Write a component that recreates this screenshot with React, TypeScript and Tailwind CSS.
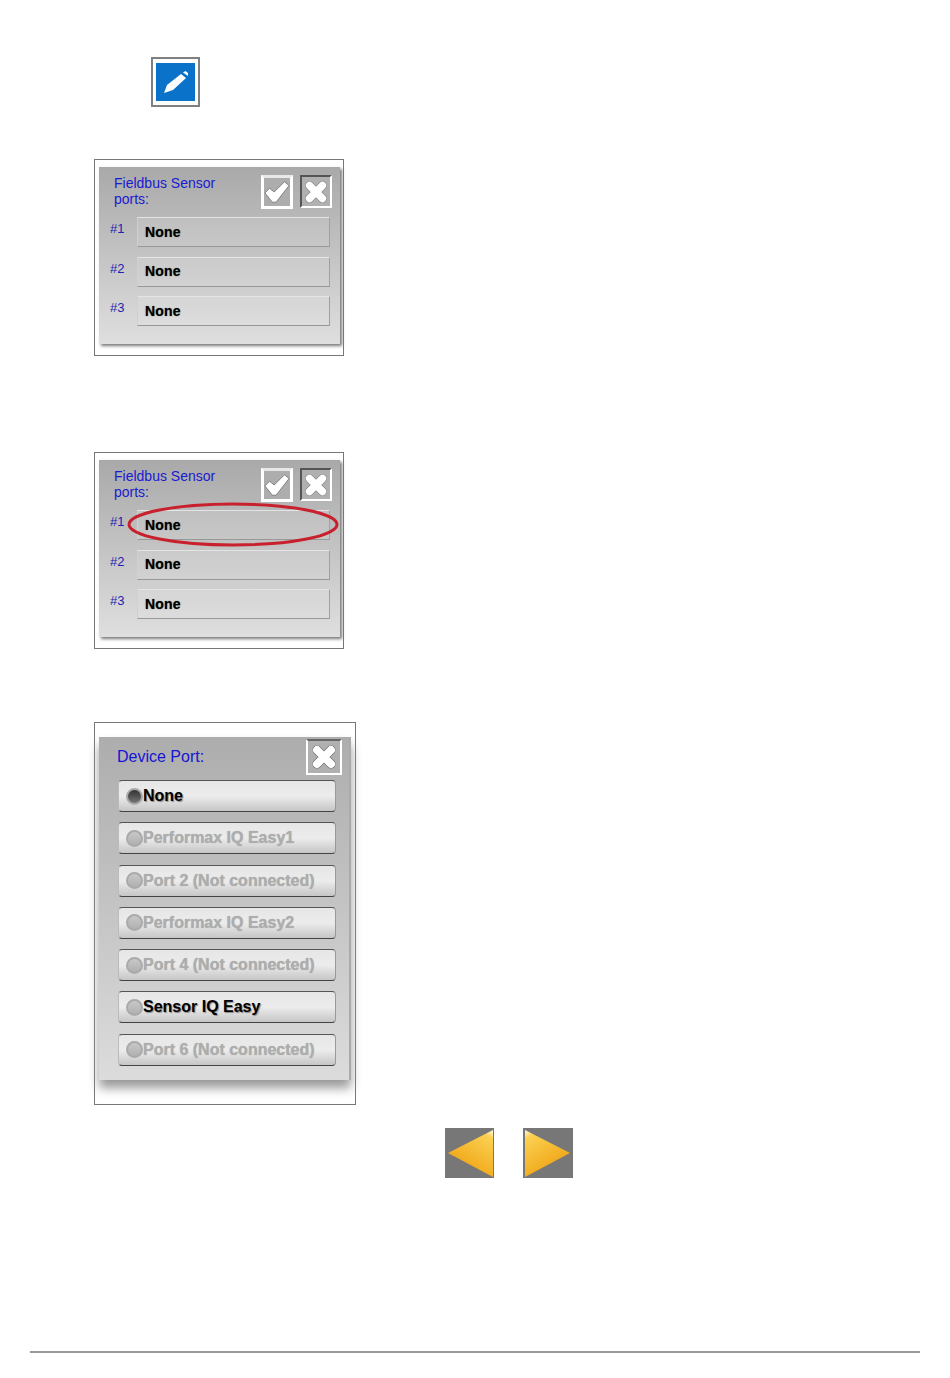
const sans = "font-['Liberation_Sans',Arial,sans-serif]";

const CheckIcon = () => (
	<svg viewBox="0 0 28 28" className="w-[26px] h-[26px]">
		<polygon
			points="1,15 6,10 11,14 22,3 27,7 13,25 9,25"
			fill="#fff"
			stroke="#666"
			strokeWidth="0.8"
			strokeLinejoin="round"
		/>
	</svg>
);

const CrossIcon = ({ size }: { size: string }) => (
	<svg viewBox="0 0 28 28" className={size}>
		<path
			d="M7 7 L21 21 M21 7 L7 21"
			fill="none"
			stroke="#666"
			strokeWidth="9"
			strokeLinecap="round"
		/>
		<path
			d="M7 7 L21 21 M21 7 L7 21"
			fill="none"
			stroke="#fff"
			strokeWidth="8"
			strokeLinecap="round"
		/>
	</svg>
);

const PortRow = ({ n }: { n: number }) => {
	return (
		<div className="flex h-[30px] pl-[11px]">
			<div className="w-[27px] pt-[4px] text-[13px] leading-[16px] text-[#2222b0]">
				#{n}
			</div>
			<div className="w-[193px] h-[30px] flex items-center pl-[7px] text-[14px] font-bold tracking-[0.2px] text-black [text-shadow:0_0_1px_#555] border border-t-[#e4e4e4] border-l-[#d0d0d0] border-r-[#a0a0a0] border-b-[#989898] bg-white/10">
				None
			</div>
		</div>
	);
};

const SensorPanel = ({ circled }: { circled?: boolean }) => {
	return (
		<div className="relative w-[250px] h-[197px] border border-[#777] bg-white pt-[7px] pl-[4px]">
			<div className={`w-[241px] h-[177px] pt-[8px] bg-gradient-to-b from-[#a9a9a9] to-[#dfdfdf] shadow-[2px_2px_3px_#777] ${sans}`}>
				<div className="flex h-[34px]">
					<div className="ml-[15px] w-[147px] text-[14px] leading-[16px] text-[#1a1ad0]">
						Fieldbus Sensor
						<br />
						ports:
					</div>
					<div className="w-[32px] h-[34px] flex items-center justify-center border-[3px] border-t-[#e8e8e8] border-white bg-[#adadad]">
						<CheckIcon />
					</div>
					<div className="ml-[7px] w-[32px] h-[33px] flex items-center justify-center border-2 border-t-[#555] border-l-[#555] border-r-white border-b-white bg-[#b0b0b0]">
						<CrossIcon size="w-[26px] h-[26px]" />
					</div>
				</div>
				<div className="mt-[8px] flex flex-col gap-[9.6px]">
					<PortRow n={1} />
					<PortRow n={2} />
					<PortRow n={3} />
				</div>
			</div>
			{circled && (
				<svg
					viewBox="0 0 212 45"
					className="absolute left-[32px] top-[49px] w-[212px] h-[45px]"
				>
					<ellipse
						cx="106"
						cy="22.5"
						rx="104"
						ry="20.5"
						fill="none"
						stroke="#c8202c"
						strokeWidth="3"
					/>
				</svg>
			)}
		</div>
	);
};

const ports = [
	{ label: "None", enabled: true, selected: true },
	{ label: "Performax IQ Easy1", enabled: false },
	{ label: "Port 2 (Not connected)", enabled: false },
	{ label: "Performax IQ Easy2", enabled: false },
	{ label: "Port 4 (Not connected)", enabled: false },
	{ label: "Sensor IQ Easy", enabled: true },
	{ label: "Port 6 (Not connected)", enabled: false },
];

const PortButton = ({
	label,
	enabled,
	selected,
}: {
	label: string;
	enabled: boolean;
	selected?: boolean;
}) => {
	return (
		<div
			className={`w-[218px] h-[32px] flex items-center pl-[7px] rounded-[4px] border border-t-[#555] border-b-[#444] border-l-[#bbb] border-r-[#999] bg-gradient-to-b from-[#e6e6e6] via-[#ececec] to-[#c6c6c6] text-[16px] font-bold ${
				enabled
					? "text-black [text-shadow:1px_1px_1px_#888]"
					: "text-[#adadad] [text-shadow:0_0_1px_#aaa]"
			}`}
		>
			<div
				className={`w-[17px] h-[17px] shrink-0 rounded-full border-2 border-[#aaa] ${
					selected
						? "bg-gradient-to-b from-[#333] to-[#777]"
						: "bg-gradient-to-b from-[#c8c8c8] to-[#b0b0b0]"
				}`}
			/>
			{label}
		</div>
	);
};

const DevicePanel = () => {
	return (
		<div className="w-[262px] h-[383px] border border-[#777] bg-white pt-[14px] pl-[4px]">
			<div className={`w-[252px] h-[343px] pt-[2px] bg-gradient-to-b from-[#adadad] to-[#dcdcdc] border-r-2 border-r-[#aaa] shadow-[0_8px_10px_#999] ${sans}`}>
				<div className="flex items-center h-[36px]">
					<div className="ml-[18px] w-[189px] text-[16px] text-[#1414d4]">
						Device Port:
					</div>
					<div className="w-[36px] h-[36px] flex items-center justify-center border-2 border-t-[#666] border-white bg-[#b0b0b0]">
						<CrossIcon size="w-[28px] h-[28px]" />
					</div>
				</div>
				<div className="mt-[5px] ml-[19px] flex flex-col gap-[10.3px]">
					{ports.map((p) => (
						<PortButton key={p.label} {...p} />
					))}
				</div>
			</div>
		</div>
	);
};

const ArrowLeft = () => (
	<svg viewBox="0 0 49 50" className="w-[49px] h-[50px] bg-[#777]">
		<defs>
			<linearGradient id="arrowL" x1="1" y1="0" x2="0.4" y2="1">
				<stop offset="0" stopColor="#fff8e0" />
				<stop offset="0.15" stopColor="#fbd050" />
				<stop offset="1" stopColor="#eea010" />
			</linearGradient>
		</defs>
		<polygon points="3,25 48,2 48,49" fill="url(#arrowL)" />
	</svg>
);

const ArrowRight = () => (
	<svg viewBox="0 0 50 50" className="w-[50px] h-[50px] bg-[#777]">
		<defs>
			<linearGradient id="arrowR" x1="0" y1="0" x2="0.6" y2="1">
				<stop offset="0" stopColor="#fff8e0" />
				<stop offset="0.15" stopColor="#fbd050" />
				<stop offset="1" stopColor="#eea010" />
			</linearGradient>
		</defs>
		<polygon points="2,2 47,25 2,49" fill="url(#arrowR)" />
	</svg>
);

const App = () => {
	return (
		<div className="w-[950px] h-[1378px] bg-white overflow-hidden pt-[57px]">
			{/* edit button */}
			<div className="ml-[151px] w-[49px] h-[50px] border-2 border-[#808080] bg-white flex items-center justify-center">
				<div className="w-[39px] h-[38px] bg-[#0a72c8]">
					<svg viewBox="0 0 39 38" className="w-[39px] h-[38px]">
						<polygon points="8,30 11,22 25,11 30,15 17,27" fill="#fff" />
						<polygon points="27,9.5 29.5,8 32,10 32,13" fill="#fff" />
					</svg>
				</div>
			</div>
			<div className="ml-[94px] mt-[52px]">
				<SensorPanel />
			</div>
			<div className="ml-[94px] mt-[96px]">
				<SensorPanel circled />
			</div>
			<div className="ml-[94px] mt-[73px]">
				<DevicePanel />
			</div>
			<div className="ml-[445px] mt-[23px] flex gap-[29px]">
				<ArrowLeft />
				<ArrowRight />
			</div>
			<div className="mx-[30px] mt-[173px] h-[2px] bg-[#999]" />
		</div>
	);
};

export default App;
